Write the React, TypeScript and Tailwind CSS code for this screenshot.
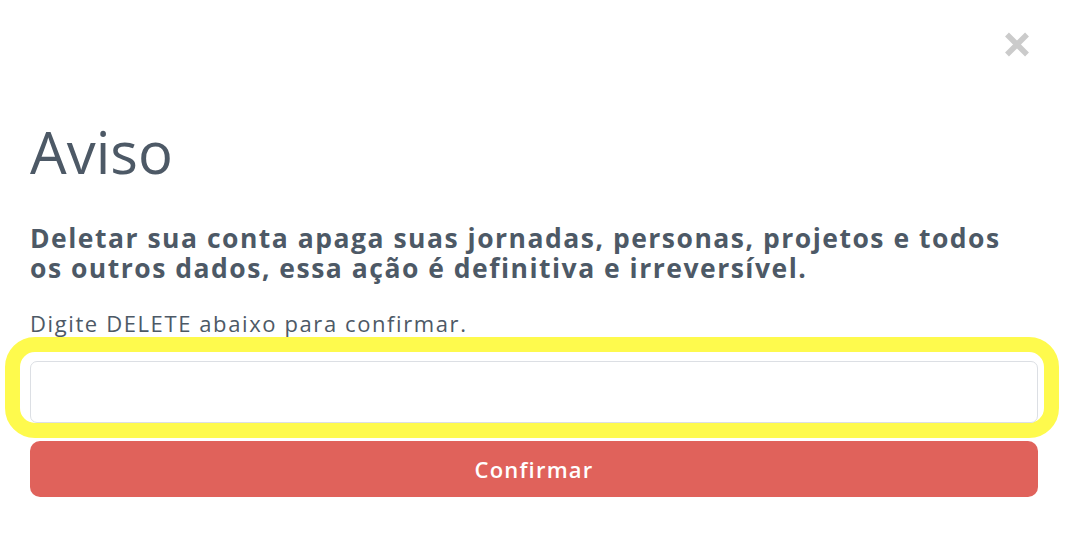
import React from "react";

export default function App() {
  return (
    <div
      className="w-[1070px] h-[546px] bg-white overflow-hidden text-[#4d5966]"
      style={{ fontFamily: '"Open Sans", "Liberation Sans", sans-serif' }}
    >
      <div className="flex justify-end pt-[32px] pr-[40px]">
        <svg width="26" height="25" viewBox="0 0 26 25">
          <path d="M3 2.5 L23 22.5 M23 2.5 L3 22.5" stroke="#cbcbcb" strokeWidth="5.5" />
        </svg>
      </div>
      <div className="pl-[30px] pr-[32px]">
        <h1 className="mt-[63px] text-[58px] leading-[64px] font-normal">Aviso</h1>
        <p className="mt-[39px] text-[26.5px] leading-[30px] font-bold tracking-[1.5px]">
          Deletar sua conta apaga suas jornadas, personas, projetos e todos
          <br />
          os outros dados, essa ação é definitiva e irreversível.
        </p>
        <p className="mt-[26px] text-[22px] leading-[28px] tracking-[1.6px]">Digite DELETE abaixo para confirmar.</p>
        <div className="relative mt-[24px]">
          <div className="absolute left-[-25px] top-[-24px] right-[-21px] bottom-[-15px] border-[15px] border-[#fefa4d] rounded-[30px] pointer-events-none" />
          <input className="relative block w-full h-[62px] rounded-[7px] border border-[#dcdfe4] bg-white outline-none" />
        </div>
        <button className="mt-[18px] w-full h-[56px] rounded-[10px] bg-[#e0625b] text-white text-[22px] font-semibold tracking-[1.2px]">
          Confirmar
        </button>
      </div>
    </div>
  );
}
